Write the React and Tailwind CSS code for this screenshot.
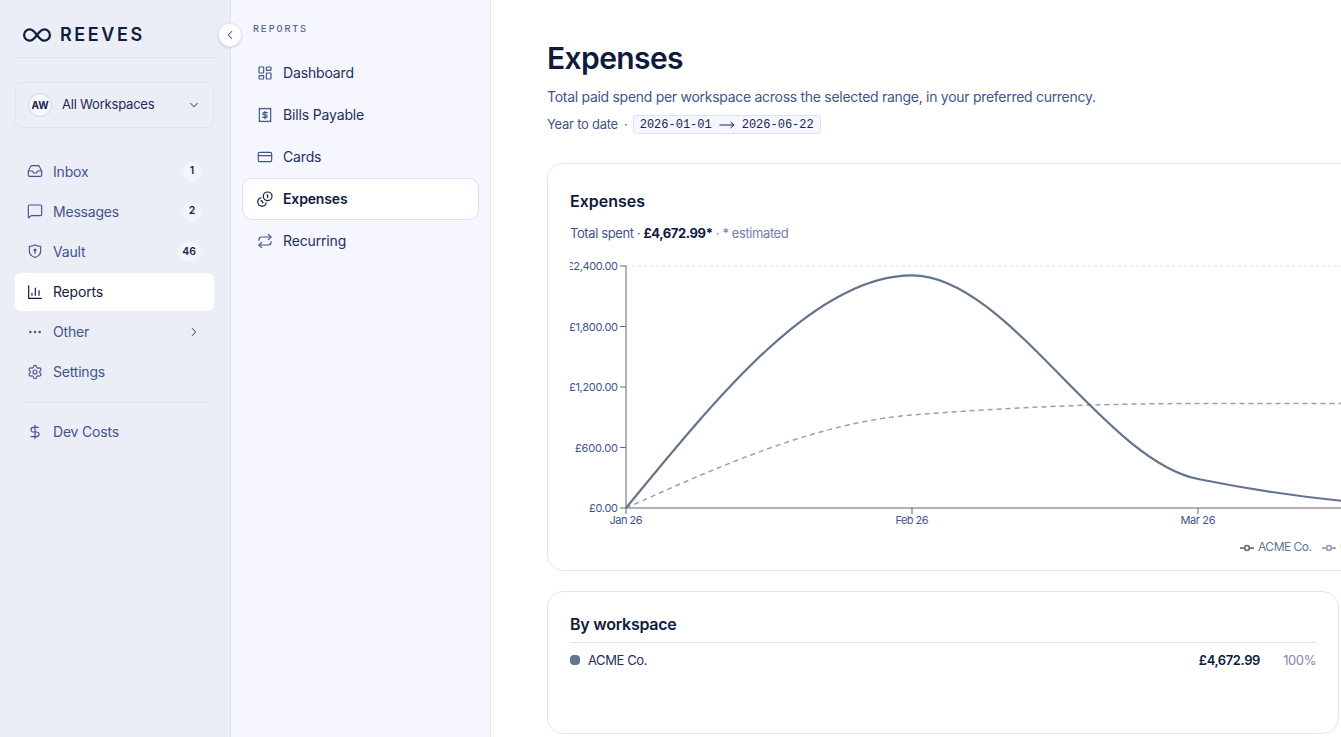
import React from 'react';
import {
  ChevronDown,
  ChevronLeft,
  ChevronRight,
  CreditCard,
  DollarSign,
  Ellipsis,
  Inbox,
  LayoutDashboard,
  MessageSquare,
  Repeat,
  Settings,
} from 'lucide-react';
import clsx from 'clsx';

const Glyph = ({ className, children }) => (
  <svg width="16" height="16" viewBox="0 0 24 24" fill="none" stroke="currentColor" strokeWidth="1.75" strokeLinecap="round" strokeLinejoin="round" className={className}>
    {children}
  </svg>
);

const VaultIcon = ({ className }) => (
  <Glyph className={className}>
    <path d="M12 2.500c2.600 1.600 5.300 2.400 8.500 2.500v7c0 5-3.600 8.200-8.500 9.800C7.100 20.200 3.500 17 3.500 12V5c3.200-.1 5.900-.9 8.500-2.500z" />
    <circle cx="12" cy="10.500" r="1.500" />
    <path d="M12 12v3.500" />
  </Glyph>
);

const ReportsIcon = ({ className }) => (
  <Glyph className={className}>
    <path d="M2.500 2.500v19h19M7.500 17v-3M12.500 17V6M18 17v-7" />
  </Glyph>
);

const BillIcon = ({ className }) => (
  <Glyph className={className}>
    <path d="M3.500 2l2 1 2-1 2.200 1L12 2l2.300 1 2.200-1 2 1 2-1v20l-2-1-2 1-2.200-1-2.300 1-2.300-1-2.200 1-2-1-2 1z" />
    <path d="M15.500 8.500h-5a1.750 1.750 0 0 0 0 3.500h3a1.750 1.750 0 0 1 0 3.500h-5M12 6.500v11" />
  </Glyph>
);

const CoinsIcon = ({ className }) => (
  <Glyph className={className}>
    <circle cx="16" cy="8" r="6.500" />
    <path d="M13.700 17.700a6.300 6.300 0 1 1-7.400-7.500M15 6h1v4M6.100 14.800l.9-.5 2 3.500" />
  </Glyph>
);

const navItems = [
  { label: 'Inbox', icon: Inbox, badge: '1' },
  { label: 'Messages', icon: MessageSquare, badge: '2' },
  { label: 'Vault', icon: VaultIcon, badge: '46' },
  { label: 'Reports', icon: ReportsIcon, active: true },
  { label: 'Other', icon: Ellipsis, more: true },
  { label: 'Settings', icon: Settings },
];

const reportItems = [
  { label: 'Dashboard', icon: LayoutDashboard },
  { label: 'Bills Payable', icon: BillIcon },
  { label: 'Cards', icon: CreditCard },
  { label: 'Expenses', icon: CoinsIcon, active: true },
  { label: 'Recurring', icon: Repeat },
];

const yTicks = [
  { label: '£2,400.00', y: 10, w: 51 },
  { label: '£1,800.00', y: 70.5, w: 49 },
  { label: '£1,200.00', y: 131, w: 49 },
  { label: '£600.00', y: 191.5, w: 43 },
  { label: '£0.00', y: 252, w: 29 },
];

const xTicks = [
  { label: 'Jan 26', x: 56, w: 33 },
  { label: 'Feb 26', x: 342, w: 33 },
  { label: 'Mar 26', x: 628, w: 35 },
];

const NavItem = ({ item }) => {
  const Icon = item.icon;
  return (
    <div
      className={clsx(
        'flex h-[38px] items-center rounded-md pl-3 pr-[13px] text-[14px]',
        item.active ? 'bg-white text-[#101c3d]' : 'text-[#43548b]'
      )}
    >
      <Icon size={16} strokeWidth={1.75} className="mr-2.5 shrink-0" />
      <span className="flex-1 tracking-[-0.200px]">{item.label}</span>
      {item.badge && (
        <span className="flex h-[19px] min-w-[18px] items-center justify-center rounded-full bg-[#f3f5fc] px-[5px] text-[10.5px] font-semibold text-[#17264f]">
          {item.badge}
        </span>
      )}
      {item.more && <ChevronRight size={14} strokeWidth={1.75} />}
    </div>
  );
};

const Sidebar = () => (
  <aside className="relative w-[231px] shrink-0 border-r border-[#dfe3ee] bg-[#ebeef7] px-[15px]">
    <div className="flex h-[58px] items-center border-b border-[#dfe3ee] pl-2 pt-3 text-[#0e1c3d]">
      <svg width="28" height="14" viewBox="0 0 28 14" fill="none" stroke="currentColor" strokeWidth="2.200">
        <path d="M14 7C11.500 3.500 9.700 1.300 6.800 1.300a5.700 5.700 0 0 0 0 11.400C9.700 12.700 11.500 10.500 14 7s4.300-5.700 7.200-5.700a5.700 5.700 0 0 1 0 11.400C18.300 12.700 16.500 10.500 14 7z" />
      </svg>
      <span className="ml-[9px] text-[18px] font-semibold leading-none tracking-[2.600px]">REEVES</span>
    </div>

    <div className="mt-6 flex h-[46px] w-[199px] items-center rounded-md border border-[#e1e5ef] pl-3 pr-3">
      <span className="flex h-6 w-6 items-center justify-center rounded-full border border-[#cfd5e5] bg-[#f6f8fd] text-[10px] font-bold text-[#17264f]">
        AW
      </span>
      <span className="ml-2.5 flex-1 text-[13px] tracking-[-0.200px] text-[#1d2b57]">All Workspaces</span>
      <ChevronDown size={14} strokeWidth={1.75} className="text-[#43548b]" />
    </div>

    <nav className="mt-6 flex w-[199px] flex-col gap-[2.200px]">
      {navItems.map((item) => (
        <NavItem key={item.label} item={item} />
      ))}
    </nav>

    <div className="mx-2 mb-2.5 mt-[11px] border-t border-[#dfe3ee]" />
    <NavItem item={{ label: 'Dev Costs', icon: DollarSign }} />

    <button className="absolute -right-3 top-[23px] z-10 flex h-6 w-6 items-center justify-center rounded-full border border-[#e1e5ef] bg-white text-[#3d4b7a] shadow">
      <ChevronLeft size={14} strokeWidth={1.75} />
    </button>
  </aside>
);

const ReportsNav = () => (
  <aside className="w-[260px] shrink-0 border-r border-[#dfe2f0] bg-[#f5f6fe] px-[11px] pt-[23px]">
    <p className="pl-[11px] font-['Liberation_Mono',monospace] text-[10px] leading-[14px] tracking-[1.850px] text-[#43548b]">REPORTS</p>
    <nav className="mt-[15px]">
      {reportItems.map((item) => {
        const Icon = item.icon;
        return (
          <div
            key={item.label}
            className={clsx(
              'flex h-[42px] w-[237px] items-center rounded-[10px] border pb-px pl-[14px] text-[14px] tracking-[-0.150px]',
              item.active
                ? 'border-[#dbdfee] bg-white font-semibold text-[#0e1b3c]'
                : 'border-transparent text-[#1e2f5c]'
            )}
          >
            <Icon size={16} strokeWidth={1.75} className={clsx('mr-2.5 shrink-0', !item.active && 'text-[#43548b]')} />
            <span className="-mt-px">{item.label}</span>
          </div>
        );
      })}
    </nav>
  </aside>
);

const ExpensesChart = () => (
  <svg width="900" height="300" viewBox="0 0 900 300" fill="none" className="block overflow-hidden">
    <path d="M56 10H900" stroke="#dde1e8" strokeDasharray="3 3" />
    <g stroke="#666666">
      <path d="M56 10V252H900" />
      {yTicks.map((t) => (
        <path key={t.label} d={`M50 ${t.y}h6`} />
      ))}
      {xTicks.map((t) => (
        <path key={t.label} d={`M${t.x} 252v6`} />
      ))}
    </g>
    <g fill="#43548b" fontSize="11">
      {yTicks.map((t) => (
        <text key={t.label} x={48 - t.w} y={t.y + 4} textLength={t.w}>{t.label}</text>
      ))}
      {xTicks.map((t) => (
        <text key={t.label} x={t.x - t.w / 2} y="268" textLength={t.w}>{t.label}</text>
      ))}
    </g>
    <path
      d="M56 252C151.300 209.300 246.700 166.700 342 159C437.300 151.300 532.700 147.500 628 147.500H900"
      stroke="#94a0b4"
      strokeWidth="1.500"
      strokeDasharray="5 4"
    />
    <path
      d="M56 252C151.300 135.500 246.700 19.300 342 19.300C437.300 19.300 532.700 203.700 628 223C723.300 242.300 818.700 252 914 252"
      stroke="#64748b"
      strokeWidth="2.200"
    />
    <g strokeWidth="1.750" stroke="#64748b">
      <path d="M670 292h4.700M679.300 292h4.700" />
      <circle cx="677" cy="292" r="2.300" />
    </g>
    <g strokeWidth="1.750" stroke="#94a3b8">
      <path d="M752 292h4.700M761.300 292h4.700" />
      <circle cx="759" cy="292" r="2.300" />
    </g>
    <text x="688" y="295" fontSize="12" fill="#64748b" textLength="54">ACME Co.</text>
    <text x="770" y="295" fontSize="12" fill="#94a3b8">Globex</text>
  </svg>
);

const App = () => (
  <div className="flex h-[737px] w-[1341px] overflow-hidden bg-white font-['Inter',sans-serif]">
    <Sidebar />
    <ReportsNav />
    <main className="min-w-0 flex-1 overflow-hidden pl-14 pt-10">
      <h1 className="text-[30px] font-semibold leading-[36px] tracking-[-0.600px] text-[#0e1b3c]">Expenses</h1>
      <p className="mt-[11px] text-[14px] leading-[20px] tracking-[-0.285px] text-[#43548b]">
        Total paid spend per workspace across the selected range, in your preferred currency.
      </p>
      <div className="mt-2 flex h-[19px] items-center text-[13px] text-[#43548b]">
        <span className="tracking-[-0.250px]">Year to date</span>
        <span className="ml-1.5 mr-[5px]">·</span>
        <span className="flex h-[19px] items-center rounded-[3px] border border-[#dfe3f0] bg-[#f5f6fe] px-1.5 font-['Liberation_Mono',monospace] text-[12px] text-[#17264f]">
          2026-01-01
          <svg width="16" height="8" viewBox="0 0 16 8" fill="none" stroke="currentColor" className="mx-[7px]">
            <path d="M0.500 4h14.500M11.500 1L15 4l-3.500 3" />
          </svg>
          2026-06-22
        </span>
      </div>

      <section className="mt-[29px] h-[408px] w-[946px] rounded-2xl border border-[#e2e6ec] px-[22px] pt-[25px]">
        <h2 className="text-[16px] font-semibold leading-6 text-[#0e1b3c]">Expenses</h2>
        <p className="mb-[13px] mt-[10px] text-[13px] leading-5 tracking-[-0.400px] text-[#43548b]">
          Total spent · <span className="font-bold text-[#0e1b3c]">£4,672.99*</span>
          <span className="text-[#7480a4]"> · * estimated</span>
        </p>
        <ExpensesChart />
      </section>

      <section className="mt-5 h-[143px] w-[792px] rounded-2xl border border-[#e2e6ec] px-[22px] pt-5">
        <h2 className="border-b border-[#dfe3ec] pb-1.5 text-[16px] font-semibold leading-6 tracking-[-0.250px] text-[#0e1b3c]">By workspace</h2>
        <div className="mt-[7px] flex items-center text-[13px] leading-5 tracking-[-0.400px]">
          <span className="mr-2 h-2.5 w-2.5 rounded-[4px] bg-[#64748b]" />
          <span className="flex-1 text-[#1e2f5c]">ACME Co.</span>
          <span className="font-semibold text-[#0e1b3c]">£4,672.99</span>
          <span className="w-14 text-right text-[#8089ac]">100%</span>
        </div>
      </section>
    </main>
  </div>
);

export default App;
